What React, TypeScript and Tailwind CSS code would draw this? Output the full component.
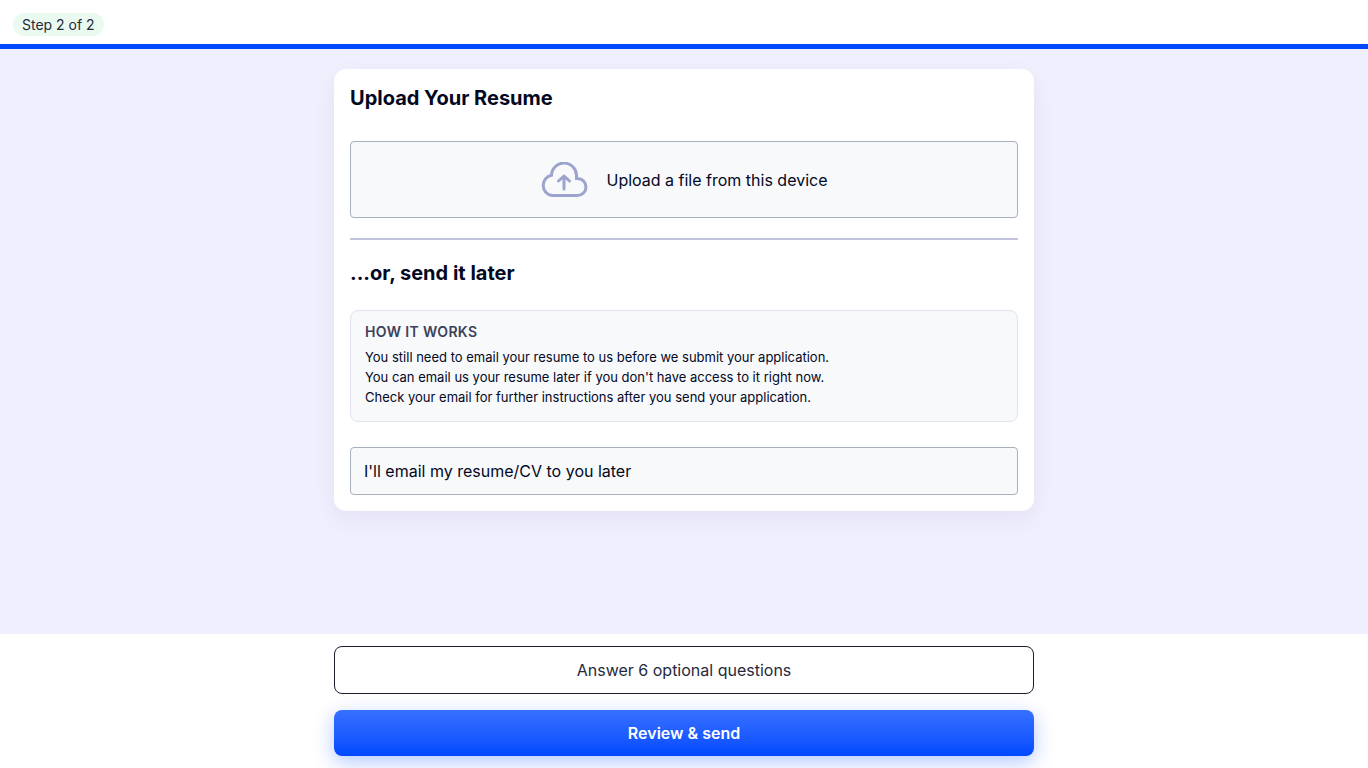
function CloudUploadIcon() {
  return (
    <svg
      className="h-9 w-12 shrink-0"
      viewBox="0 0 48 36"
      fill="none"
      stroke="#9ca3cc"
      strokeWidth="3"
      strokeLinecap="round"
      strokeLinejoin="miter"
      aria-hidden="true"
    >
      <path d="M12 33.5H37.5A8.5 8.5 0 0 0 37.5 16.5H36.5V14A12.5 12.5 0 0 0 11.5 13.2A10.3 10.3 0 0 0 12 33.5Z" />
      <path d="M24 27V14.5M18.5 19L24 14L29.5 19" strokeLinejoin="round" />
    </svg>
  );
}

function HowItWorks() {
  return (
    <section className="mb-[25px] rounded-lg border border-[#e2e3f1] bg-[#f7f9fb] px-3.5 pt-3 pb-3.5">
      <h3 className="mb-1.5 text-sm leading-[18px] font-semibold tracking-wide text-[#3d4159] uppercase">
        How it works
      </h3>
      <p className="text-[13px] leading-5">
        You still need to email your resume to us before we submit your application.
        <br />
        You can email us your resume later if you don't have access to it right now.
        <br />
        Check your email for further instructions after you send your application.
      </p>
    </section>
  );
}

export default function App() {
  return (
    <div className="flex min-h-screen flex-col bg-white font-['Inter','Liberation_Sans',sans-serif] text-[#03081f]">
      <header className="flex h-[49px] shrink-0 items-center border-b-[5px] border-[#0048ff] px-[13px] pt-1">
        <span className="rounded-full bg-[#eafaf0] px-[9px] py-0.5 text-sm leading-[19px] text-[#252a3d]">
          Step 2 of 2
        </span>
      </header>

      <main className="flex-1 bg-[#f0effe] px-4 py-5">
        <div className="mx-auto w-full max-w-[700px] rounded-xl bg-white p-4 shadow-[0_8px_24px_rgba(30,20,80,0.06)]">
          <h2 className="mb-[30px] text-xl leading-[26px] font-bold">Upload Your Resume</h2>
          <button
            type="button"
            className="flex h-[77px] w-full items-center justify-center gap-[18px] rounded border border-[#a6afba] bg-[#f7f9fb] text-base leading-6"
          >
            <CloudUploadIcon />
            Upload a file from this device
          </button>

          <hr className="my-5 border-t-2 border-[#c1c3dc]" />

          <h2 className="mb-6 text-xl leading-[26px] font-bold">...or, send it later</h2>
          <HowItWorks />
          <button
            type="button"
            className="block h-12 w-full rounded border border-[#a6afba] bg-[#f7f9fb] px-[13px] text-left text-base leading-6"
          >
            I'll email my resume/CV to you later
          </button>
        </div>
      </main>

      <footer className="shrink-0 overflow-hidden bg-white px-4 py-3">
        <div className="mx-auto flex w-full max-w-[700px] flex-col gap-4">
          <button
            type="button"
            className="h-12 rounded-lg border border-[#1b1d30] bg-white text-base leading-6 text-[#252a3d]"
          >
            Answer 6 optional questions
          </button>
          <button
            type="button"
            className="h-[46px] rounded-lg bg-linear-to-b from-[#3770ff] to-[#0048ff] text-base leading-6 font-semibold text-white shadow-[0_6px_20px_rgba(0,72,255,0.3)]"
          >
            Review &amp; send
          </button>
        </div>
      </footer>
    </div>
  );
}
